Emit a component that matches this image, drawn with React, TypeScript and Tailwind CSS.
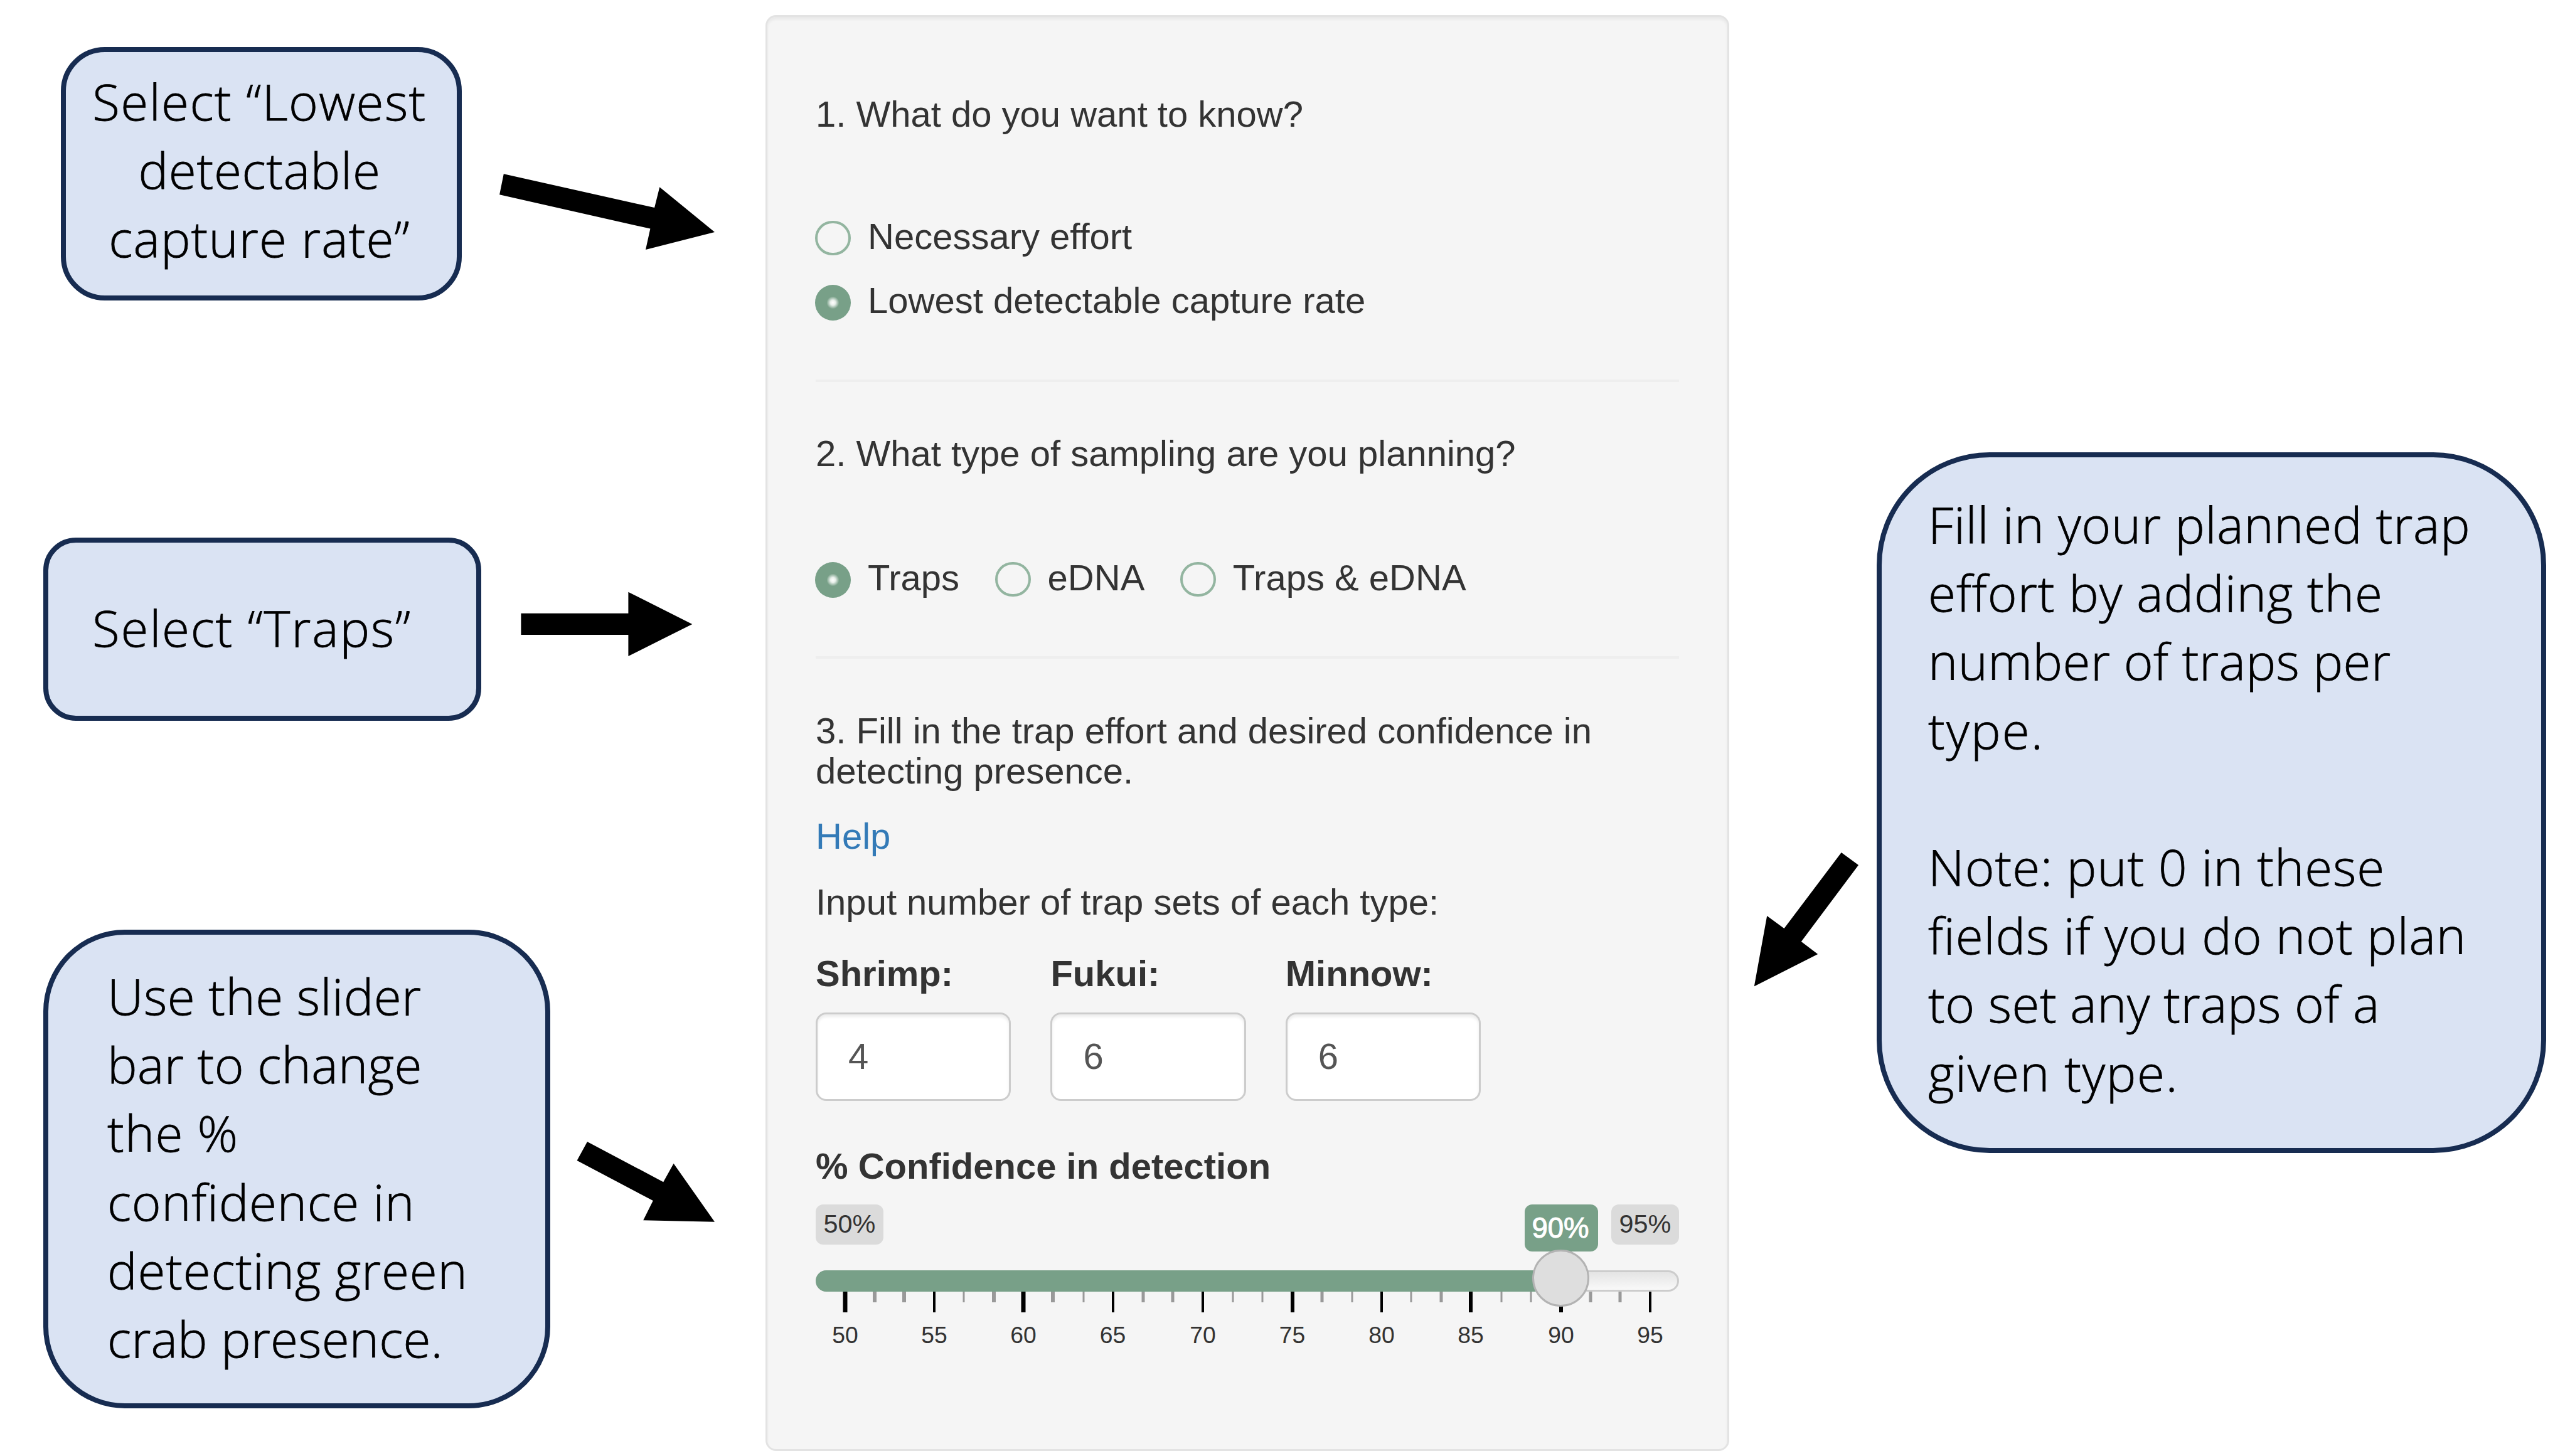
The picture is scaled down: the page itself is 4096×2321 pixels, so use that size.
type Line = { text: string; className: string };

const captureLines: Line[] = [
  { text: "Select “Lowest", className: "tracking-[1.4px]" },
  { text: "detectable", className: "tracking-[0.7px]" },
  { text: "capture rate”", className: "tracking-[1.1px]" },
];

const trapsLines: Line[] = [
  { text: "Select “Traps”", className: "tracking-[1.8px]" },
];

const sliderLines: Line[] = [
  { text: "Use the slider", className: "tracking-[0.45px]" },
  { text: "bar to change", className: "tracking-[0.4px]" },
  { text: "the %", className: "tracking-[1.2px]" },
  { text: "confidence in", className: "tracking-[0.7px]" },
  { text: "detecting green", className: "tracking-[0.8px]" },
  { text: "crab presence.", className: "tracking-[0.2px]" },
];

const effortLines: Line[] = [
  { text: "Fill in your planned trap", className: "tracking-[0.7px]" },
  { text: "effort by adding the", className: "tracking-[0.95px]" },
  { text: "number of traps per", className: "tracking-[0.45px]" },
  { text: "type.", className: "tracking-[2.2px]" },
  { text: "", className: "" },
  { text: "Note: put 0 in these", className: "tracking-[0.95px]" },
  { text: "fields if you do not plan", className: "tracking-[0.85px]" },
  { text: "to set any traps of a", className: "tracking-[0.45px]" },
  { text: "given type.", className: "tracking-[1.5px]" },
];

// x offset from the left end of the track, and thickness
const majorTicks = [
  { label: 50, x: 47, w: 7 },
  { label: 55, x: 189, w: 4 },
  { label: 60, x: 331, w: 7 },
  { label: 65, x: 473.5, w: 4 },
  { label: 70, x: 617, w: 4 },
  { label: 75, x: 759.5, w: 6 },
  { label: 80, x: 902, w: 4 },
  { label: 85, x: 1044, w: 6 },
  { label: 90, x: 1188, w: 6 },
  { label: 95, x: 1330, w: 4 },
];

const minorTicks = [
  { x: 94, w: 6 },
  { x: 140.5, w: 6 },
  { x: 236, w: 3 },
  { x: 284, w: 6 },
  { x: 378, w: 6 },
  { x: 427, w: 3 },
  { x: 522, w: 5 },
  { x: 569, w: 5 },
  { x: 664.5, w: 3 },
  { x: 711.5, w: 3 },
  { x: 807, w: 5 },
  { x: 855, w: 3 },
  { x: 949, w: 3 },
  { x: 997, w: 5 },
  { x: 1092.5, w: 3 },
  { x: 1140, w: 3 },
  { x: 1234.5, w: 5 },
  { x: 1281.5, w: 5 },
];

const trapInputs = [
  { label: "Shrimp:", value: 4 },
  { label: "Fukui:", value: 6 },
  { label: "Minnow:", value: 6 },
];

function Callout({ lines, className }: { lines: Line[]; className: string }) {
  return (
    <div
      className={`shrink-0 border-8 border-[#172c51] bg-[#dae3f3] font-['Open_Sans',sans-serif] text-[80px] leading-[109.2px] font-light whitespace-nowrap text-black [-webkit-text-stroke:0.8px_black] ${className}`}
    >
      {lines.map((line, i) => (
        <p key={i} className={`h-[109.2px] ${line.className}`}>
          {line.text}
        </p>
      ))}
    </div>
  );
}

function Radio({ label, checked }: { label: string; checked?: boolean }) {
  return (
    <label className="flex h-[56px] items-start gap-[27px]">
      {checked ? (
        <span className="mt-[3px] -ml-px size-[57px] shrink-0 rounded-full bg-[#78a088] bg-[radial-gradient(circle,#ffffff_0,#e9f0eb_4px,#78a088_10px)]" />
      ) : (
        <span className="mt-[3px] -ml-px h-[55px] w-[57px] shrink-0 rounded-full border-4 border-[#93b5a0]" />
      )}
      <span>{label}</span>
    </label>
  );
}

function Slider() {
  return (
    <div className="relative h-[240px] w-[1376px]">
      <span className="absolute top-0 left-0 flex h-[64px] w-[108px] items-center justify-center rounded-[12px] bg-[#dbdbdb] text-[41.4px] leading-none text-[#333]">
        50%
      </span>
      <span className="absolute top-0 right-0 flex h-[64px] w-[108px] items-center justify-center rounded-[12px] bg-[#dbdbdb] text-[41.4px] leading-none text-[#333]">
        95%
      </span>
      <span className="absolute top-0 left-[1130px] flex h-[75px] w-[117px] items-center justify-center rounded-[12px] bg-[#78a088] pr-[3px] text-[45.5px] leading-none text-white [-webkit-text-stroke:1px_white]">
        90%
      </span>

      {/* track */}
      <div className="absolute top-[105px] left-0 h-[34px] w-full rounded-full border-[3px] border-[#cccccc] bg-gradient-to-b from-[#e4e4e4] to-[#f9f9f9]" />
      <div className="absolute top-[105px] left-0 h-[34px] w-[1188px] rounded-l-full bg-[#78a088]" />

      {/* grid */}
      {minorTicks.map((t) => (
        <span
          key={t.x}
          className="absolute top-[139px] h-[17px] -translate-x-1/2 bg-[#999]"
          style={{ left: t.x, width: t.w }}
        />
      ))}
      {majorTicks.map((t) => (
        <span
          key={t.label}
          className="absolute top-[139px] h-[33px] -translate-x-1/2 bg-black"
          style={{ left: t.x, width: t.w }}
        />
      ))}
      {majorTicks.map((t) => (
        <span
          key={t.label}
          className="absolute top-[189px] -translate-x-1/2 text-[37.3px] leading-[38px] text-[#333]"
          style={{ left: t.x }}
        >
          {t.label}
        </span>
      ))}

      {/* handle */}
      <div className="absolute top-[72px] left-[1142px] size-[91px] rounded-full border-[3px] border-[#b3b3b3] bg-[#dedede]" />
    </div>
  );
}

export default function App() {
  return (
    <div className="flex h-[2321px] w-[4096px] overflow-hidden bg-white">
      {/* left callouts */}
      <div className="flex w-[1220px] shrink-0 flex-col">
        <div className="mt-[75px] ml-[97px] flex h-[404px] items-start">
          <Callout
            lines={captureLines}
            className="h-[404px] w-[639px] rounded-[70px] pt-[22.5px] pr-[6px] text-center"
          />
          <svg className="mt-[202px] ml-[60px] h-[121px] w-[343px] shrink-0" viewBox="796 277 343 121">
            <polygon points="802.8,277.3 1043.1,331 1051.3,298.3 1139,370 1029,398 1036.4,364.6 796.1,310.3" />
          </svg>
        </div>
        <div className="mt-[378px] ml-[69px] flex h-[292px] items-start">
          <Callout
            lines={trapsLines}
            className="h-[292px] w-[698px] rounded-[52px] pt-[80px] pl-[70px]"
          />
          <svg className="mt-[86px] ml-[63px] h-[104px] w-[274px] shrink-0" viewBox="830 943 274 104">
            <polygon points="830.4,977.8 1001.4,977.8 1001.4,943.7 1103.3,994.9 1001.4,1046 1001.4,1011.9 830.4,1011.9" />
          </svg>
        </div>
        <div className="mt-[333px] ml-[69px] flex h-[763px] items-start">
          <Callout
            lines={sliderLines}
            className="h-[763px] w-[808px] rounded-[130px] pt-[42px] pl-[94px]"
          />
          <svg className="mt-[337px] ml-[42px] h-[129px] w-[220px] shrink-0" viewBox="919 1819 220 129">
            <polygon points="936,1819.9 1057.2,1884.2 1073.6,1854.7 1139,1947.8 1025.2,1945.2 1040.8,1914.1 919.6,1849.9" />
          </svg>
        </div>
      </div>

      {/* input panel */}
      <div className="mt-[24px] flex h-[2289px] w-[1536px] shrink-0 flex-col rounded-[17px] border-[3px] border-[#e3e3e3] bg-[#f5f5f5] px-[77px] pt-[122.5px] font-['Liberation_Sans',Arial,sans-serif] text-[58px] leading-[56px] whitespace-nowrap text-[#333] shadow-[inset_0_4px_4px_rgba(0,0,0,0.05)]">
        <h4 className="h-[63.4px] leading-[63.4px]">1. What do you want to know?</h4>
        <div className="mt-[136.6px] flex flex-col gap-[46px]">
          <Radio label="Necessary effort" />
          <Radio label="Lowest detectable capture rate" checked />
        </div>
        <hr className="mt-[97.5px] h-[4px] border-0 bg-[#eeeeee]" />

        <h4 className="mt-[82.3px] h-[63.4px] leading-[63.4px]">
          2. What type of sampling are you planning?
        </h4>
        <div className="mt-[138.6px] flex gap-[57.5px]">
          <Radio label="Traps" checked />
          <Radio label="eDNA" />
          <Radio label="Traps & eDNA" />
        </div>
        <hr className="mt-[97.2px] h-[4px] border-0 bg-[#eeeeee]" />

        <h4 className="mt-[82.9px] leading-[63.4px]">
          3. Fill in the trap effort and desired confidence in
          <br />
          detecting presence.
        </h4>
        <a className="mt-[45.1px] text-[#337ab7]">Help</a>
        <p className="mt-[48.5px]">Input number of trap sets of each type:</p>

        <div className="mt-[58.6px] flex gap-[63px]">
          {trapInputs.map((input) => (
            <div key={input.label} className="flex w-[311.4px] flex-col">
              <span className="font-bold">{input.label}</span>
              <div className="mt-[33.3px] flex h-[141px] items-center rounded-[17px] border-[3px] border-[#cccccc] bg-white pl-[49px] text-[#555] shadow-[inset_0_4px_4px_rgba(0,0,0,0.075)]">
                {input.value}
              </div>
            </div>
          ))}
        </div>

        <p className="mt-[76px] mb-[33.2px] font-bold">% Confidence in detection</p>
        <Slider />
      </div>

      {/* right callout */}
      <div className="flex items-start">
        <svg className="mt-[1358px] ml-[40px] h-[215px] w-[166px] shrink-0" viewBox="2796 1358 166 215">
          <polygon points="2934.7,1358.9 2962,1378.9 2870.8,1500.9 2897.2,1521 2795.8,1572.3 2816.2,1460 2843.5,1480.1" />
        </svg>
        <Callout
          lines={effortLines}
          className="mt-[721px] ml-[29px] h-[1117px] w-[1067px] rounded-[180px] pt-[51px] pl-[74px]"
        />
      </div>
    </div>
  );
}
